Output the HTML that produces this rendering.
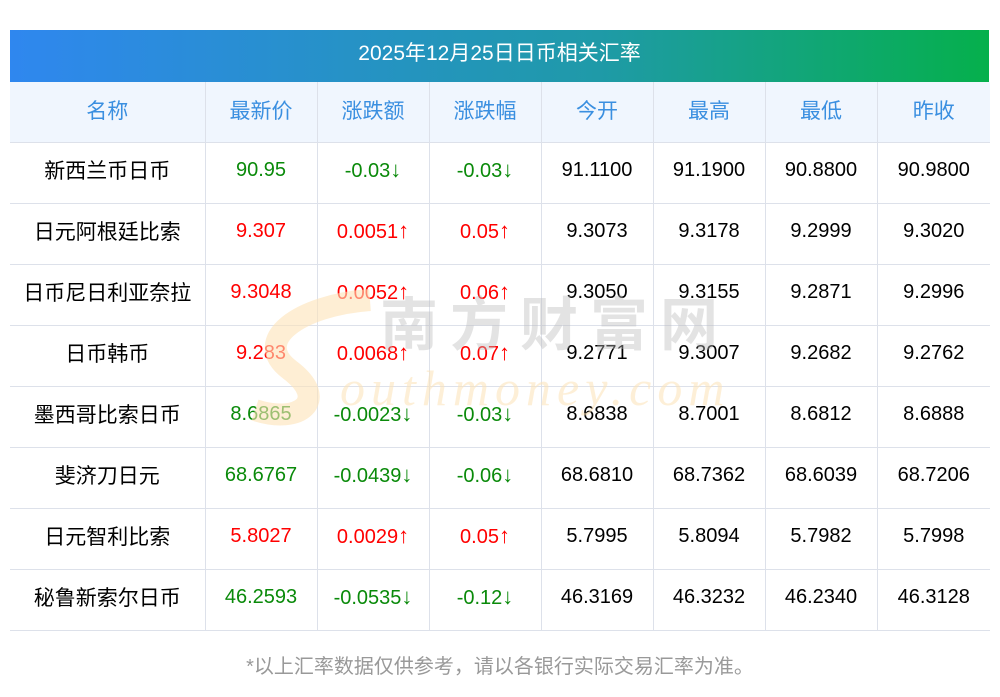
<!DOCTYPE html>
<html><head><meta charset="utf-8"><style>
body{margin:0;width:1000px;height:697px;background:#fff;position:relative;overflow:hidden;font-family:"Liberation Sans","Noto Sans CJK SC",sans-serif}
.title{position:absolute;left:10px;top:30px;width:979px;height:52px;background:linear-gradient(90deg,#2f87ef,#1f9aa8 60%,#05b04c);color:#fff;font-size:21px;text-align:center;line-height:48px}
table{position:absolute;left:10px;top:82px;width:980px;border-collapse:collapse;table-layout:fixed;font-size:20px}
td{border:1px solid #dde1ea;text-align:center;height:61px;padding:0 0 4px 0;box-sizing:border-box}
td:first-child{padding-bottom:6px;font-size:21px}
tr:first-child td{border-top:none}
td:first-child{border-left:none}td:last-child{border-right:none}
.h td{background:#f0f6fe;color:#3a8fe0;height:60px;padding-bottom:4px;font-size:21px}
.g{color:#0a8a0a}.r{color:#f00}
.a{font-size:22px;line-height:1}
.wm{position:absolute;left:0;top:0;pointer-events:none}
.foot{position:absolute;top:650px;left:0;width:1000px;text-align:center;color:#999;font-size:20px}
</style></head><body>
<div class="title">2025年12月25日日币相关汇率</div>
<table>
<colgroup><col style="width:195px"><col style="width:112px"><col style="width:112px"><col style="width:112px"><col style="width:112px"><col style="width:112px"><col style="width:112px"><col style="width:113px"></colgroup>
<tr class="h"><td>名称</td><td>最新价</td><td>涨跌额</td><td>涨跌幅</td><td>今开</td><td>最高</td><td>最低</td><td>昨收</td></tr>
<tr><td>新西兰币日币</td><td class="g">90.95</td><td class="g">-0.03<span class="a">↓</span></td><td class="g">-0.03<span class="a">↓</span></td><td>91.1100</td><td>91.1900</td><td>90.8800</td><td>90.9800</td></tr>
<tr><td>日元阿根廷比索</td><td class="r">9.307</td><td class="r">0.0051<span class="a">↑</span></td><td class="r">0.05<span class="a">↑</span></td><td>9.3073</td><td>9.3178</td><td>9.2999</td><td>9.3020</td></tr>
<tr><td>日币尼日利亚奈拉</td><td class="r">9.3048</td><td class="r">0.0052<span class="a">↑</span></td><td class="r">0.06<span class="a">↑</span></td><td>9.3050</td><td>9.3155</td><td>9.2871</td><td>9.2996</td></tr>
<tr><td>日币韩币</td><td class="r">9.283</td><td class="r">0.0068<span class="a">↑</span></td><td class="r">0.07<span class="a">↑</span></td><td>9.2771</td><td>9.3007</td><td>9.2682</td><td>9.2762</td></tr>
<tr><td>墨西哥比索日币</td><td class="g">8.6865</td><td class="g">-0.0023<span class="a">↓</span></td><td class="g">-0.03<span class="a">↓</span></td><td>8.6838</td><td>8.7001</td><td>8.6812</td><td>8.6888</td></tr>
<tr><td>斐济刀日元</td><td class="g">68.6767</td><td class="g">-0.0439<span class="a">↓</span></td><td class="g">-0.06<span class="a">↓</span></td><td>68.6810</td><td>68.7362</td><td>68.6039</td><td>68.7206</td></tr>
<tr><td>日元智利比索</td><td class="r">5.8027</td><td class="r">0.0029<span class="a">↑</span></td><td class="r">0.05<span class="a">↑</span></td><td>5.7995</td><td>5.8094</td><td>5.7982</td><td>5.7998</td></tr>
<tr><td>秘鲁新索尔日币</td><td class="g">46.2593</td><td class="g">-0.0535<span class="a">↓</span></td><td class="g">-0.12<span class="a">↓</span></td><td>46.3169</td><td>46.3232</td><td>46.2340</td><td>46.3128</td></tr>
</table>
<svg class="wm" width="1000" height="697">
<path d="M370 300 C300 305 250 340 290 370 C330 400 300 425 255 410" stroke="#fde3b8" stroke-width="22" fill="none" opacity=".6"/>
<text x="380" y="345" font-size="58" font-weight="bold" fill="#bbb" opacity=".4" font-family="Noto Sans CJK SC" letter-spacing="12">南方财富网</text>
<text x="340" y="405" font-size="50" fill="#fde3b8" opacity=".55" font-style="italic" font-family="Liberation Serif" letter-spacing="6">outhmoney.com</text>
</svg>
<div class="foot">*以上汇率数据仅供参考，请以各银行实际交易汇率为准。</div>
</body></html>
